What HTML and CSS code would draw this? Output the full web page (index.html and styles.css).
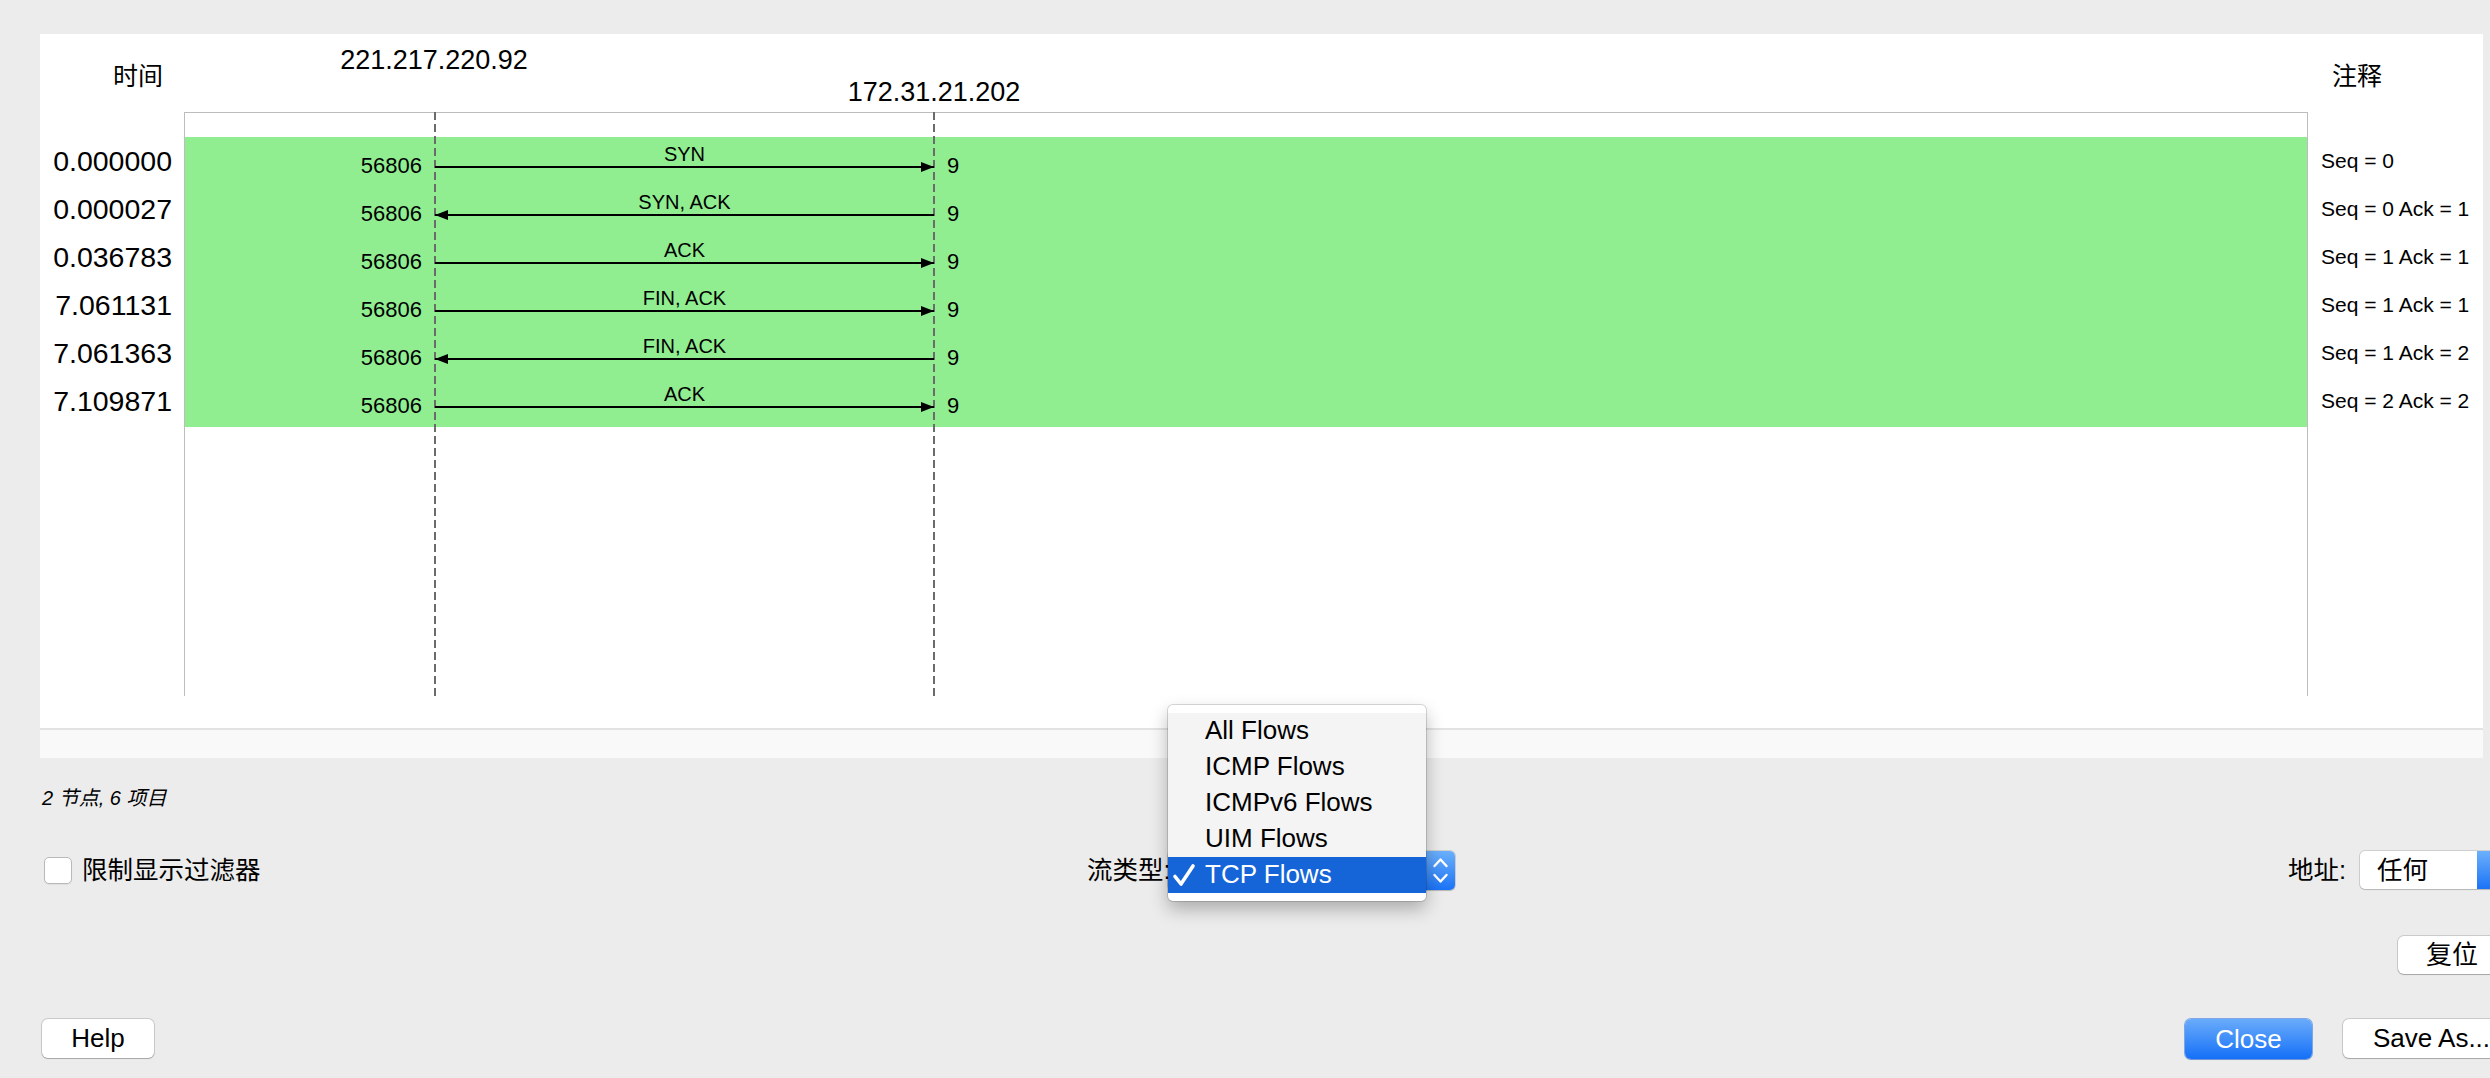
FILE: index.html
```html
<!DOCTYPE html>
<html lang="zh">
<head>
<meta charset="utf-8">
<title>Flow Graph</title>
<link rel="stylesheet" href="styles.css">
</head>
<body>
<div class="window">
  <div class="panel">
    <div class="diagram">
      <div class="time-head">时间</div>
      <div class="plot-head">
        <span class="node node-a">221.217.220.92</span>
        <span class="node node-b">172.31.21.202</span>
      </div>
      <div class="note-head">注释</div>

      <div class="times">
        <div>0.000000</div>
        <div>0.000027</div>
        <div>0.036783</div>
        <div>7.061131</div>
        <div>7.061363</div>
        <div>7.109871</div>
      </div>

      <div class="plot">
        <div class="lifeline lifeline-a"></div>
        <div class="lifeline lifeline-b"></div>
        <div class="band">
          <div class="row">
            <span class="port">56806</span>
            <div class="msg"><span class="lbl">SYN</span><i class="line to-right"></i></div>
            <span class="port-b">9</span>
          </div>
          <div class="row">
            <span class="port">56806</span>
            <div class="msg"><span class="lbl">SYN, ACK</span><i class="line to-left"></i></div>
            <span class="port-b">9</span>
          </div>
          <div class="row">
            <span class="port">56806</span>
            <div class="msg"><span class="lbl">ACK</span><i class="line to-right"></i></div>
            <span class="port-b">9</span>
          </div>
          <div class="row">
            <span class="port">56806</span>
            <div class="msg"><span class="lbl">FIN, ACK</span><i class="line to-right"></i></div>
            <span class="port-b">9</span>
          </div>
          <div class="row">
            <span class="port">56806</span>
            <div class="msg"><span class="lbl">FIN, ACK</span><i class="line to-left"></i></div>
            <span class="port-b">9</span>
          </div>
          <div class="row">
            <span class="port">56806</span>
            <div class="msg"><span class="lbl">ACK</span><i class="line to-right"></i></div>
            <span class="port-b">9</span>
          </div>
        </div>
      </div>

      <div class="notes">
        <div>Seq = 0</div>
        <div>Seq = 0 Ack = 1</div>
        <div>Seq = 1 Ack = 1</div>
        <div>Seq = 1 Ack = 1</div>
        <div>Seq = 1 Ack = 2</div>
        <div>Seq = 2 Ack = 2</div>
      </div>
    </div>
  </div>
  <div class="strip"></div>

  <div class="status">2 节点, 6 项目</div>

  <div class="controls">
    <label class="check">
      <span class="box"></span>
      <span class="check-label">限制显示过滤器</span>
    </label>
    <div class="flow">
      <span class="flow-label">流类型:</span>
      <div class="popup">
        <span class="stepper">
          <svg width="29" height="39" viewBox="0 0 29 39"><path d="M8.5 15 L14.5 8.5 L20.5 15" fill="none" stroke="#fff" stroke-width="2.4" stroke-linecap="round" stroke-linejoin="round"/><path d="M8.5 24 L14.5 30.5 L20.5 24" fill="none" stroke="#fff" stroke-width="2.4" stroke-linecap="round" stroke-linejoin="round"/></svg>
        </span>
        <div class="menu">
          <div class="menu-list">
            <div class="item">All Flows</div>
            <div class="item">ICMP Flows</div>
            <div class="item">ICMPv6 Flows</div>
            <div class="item">UIM Flows</div>
            <div class="item sel">
              <svg class="tick" width="26" height="24" viewBox="0 0 26 24"><path d="M4 13.5 L10 21 L22 3" fill="none" stroke="#fff" stroke-width="3.6" stroke-linecap="round" stroke-linejoin="round"/></svg>TCP Flows
            </div>
          </div>
        </div>
      </div>
    </div>
    <div class="addr">
      <span class="addr-label">地址:</span>
      <div class="combo">
        <span class="combo-text">任何</span>
        <span class="combo-step"></span>
      </div>
    </div>
  </div>

  <div class="reset-row">
    <button class="btn reset">复位</button>
  </div>

  <div class="buttons">
    <button class="btn help">Help</button>
    <button class="btn primary close">Close</button>
    <button class="btn save">Save As...</button>
  </div>
</div>
</body>
</html>
```

FILE: styles.css
```css
* { box-sizing: border-box; }
html, body { margin: 0; padding: 0; }
body {
  background: #ececec;
  width: 2490px;
  height: 1078px;
  overflow: hidden;
  font-family: "Liberation Sans", "Noto Sans CJK SC", sans-serif;
  color: #000;
}
.window { width: 2560px; padding-top: 34px; }

/* ---------- diagram panel ---------- */
.panel {
  margin-left: 40px;
  width: 2443px;
  height: 694px;
  background: #fff;
}
.diagram {
  display: grid;
  grid-template-columns: 144px 2124px 175px;
  grid-template-rows: 78px 584px;
}
.time-head {
  text-align: right;
  padding: 27px 21px 0 0;
  font-size: 25px;
  line-height: 30px;
}
.plot-head { position: relative; }
.node {
  position: absolute;
  font-size: 27px;
  line-height: 32px;
  white-space: nowrap;
  transform: translateX(-50%);
}
.node-a { left: 250px; top: 10px; }
.node-b { left: 750px; top: 42px; }
.note-head {
  padding: 27px 0 0 24px;
  font-size: 25px;
  line-height: 30px;
}
.times {
  padding: 25px 12px 0 0;
  text-align: right;
  font-size: 28.5px;
}
.times div { height: 48px; line-height: 48px; }

.plot {
  position: relative;
  border: 1px solid #bdbdbd;
  border-bottom: none;
  padding-top: 24px;
}
.lifeline {
  position: absolute;
  top: -1px;
  bottom: 0;
  width: 2px;
  background: repeating-linear-gradient(to bottom, #6b6b6b 0 8px, transparent 8px 12px);
  z-index: 1;
}
.lifeline-a { left: 249px; }
.lifeline-b { left: 748px; }
.band { background: #90ee90; padding-bottom: 2px; }
.row {
  display: grid;
  grid-template-columns: 250px 499px 1fr;
  height: 48px;
}
.port, .port-b {
  font-size: 22px;
  line-height: 24px;
  padding-top: 17px;
}
.port { text-align: right; padding-right: 13px; }
.port-b { padding-left: 13px; }
.msg { display: flex; flex-direction: column; }
.lbl {
  text-align: center;
  font-size: 20px;
  line-height: 22px;
  padding-top: 6px;
}
.line {
  position: relative;
  display: block;
  height: 2px;
  margin-top: 1px;
  background: #000;
  z-index: 2;
}
.to-right::after, .to-left::before {
  content: "";
  position: absolute;
  top: -4px;
  border-top: 5px solid transparent;
  border-bottom: 5px solid transparent;
}
.to-right::after { right: 0; border-left: 13px solid #000; }
.to-left::before { left: 0; border-right: 13px solid #000; }

.notes {
  padding: 25px 0 0 13px;
  font-size: 21px;
}
.notes div { height: 48px; line-height: 48px; white-space: nowrap; }

.strip {
  margin-left: 40px;
  width: 2443px;
  height: 30px;
  border-top: 2px solid #e3e3e3;
  background: #f9f9f9;
}

/* ---------- bottom controls ---------- */
.status {
  margin: 28px 0 0 42px;
  font-style: italic;
  font-size: 20px;
  line-height: 24px;
}
.controls {
  margin-top: 40px;
  height: 40px;
  display: grid;
  grid-template-columns: 1087px 1201px 1fr;
  align-items: center;
}
.check {
  display: flex;
  align-items: center;
  padding-left: 44px;
}
.box {
  width: 28px;
  height: 27px;
  border-radius: 5px;
  background: #fff;
  border: 1px solid #b9b9b9;
  box-shadow: 0 1px 1px rgba(0,0,0,0.06);
}
.check-label {
  margin-left: 10px;
  font-size: 25.5px;
  line-height: 30px;
}
.flow { display: flex; align-items: center; }
.flow-label {
  width: 81px;
  font-size: 25.5px;
  line-height: 30px;
  white-space: nowrap;
}
.popup {
  position: relative;
  width: 287px;
  height: 39px;
  background: #fff;
  border-radius: 5px;
  box-shadow: 0 0 0 1px rgba(0,0,0,0.12), 0 1px 1px rgba(0,0,0,0.12);
}
.stepper {
  position: absolute;
  right: 0; top: 0; bottom: 0;
  width: 29px;
  border-radius: 0 5px 5px 0;
  background: linear-gradient(#6cb0fc, #1b73f6);
}
.stepper svg { display: block; }
.menu {
  position: absolute;
  left: 0;
  top: -146px;
  width: 258px;
  height: 196px;
  padding: 8px 0;
  background: #fff;
  border-radius: 5px;
  box-shadow: 0 0 0 1px rgba(0,0,0,0.14), 0 8px 18px rgba(0,0,0,0.28);
  z-index: 5;
}
.menu-list { background: #f4f4f4; }
.item {
  height: 36px;
  line-height: 34px;
  padding-left: 37px;
  font-size: 26px;
  white-space: nowrap;
  position: relative;
}
.item.sel { background: #1565d9; color: #fff; }
.tick {
  position: absolute;
  left: 3px;
  top: 6px;
  display: block;
}

.addr { display: flex; align-items: center; }
.addr-label { font-size: 25.5px; line-height: 30px; }
.combo {
  position: relative;
  margin-left: 14px;
  width: 140px;
  height: 38px;
  background: #fff;
  border-radius: 5px;
  box-shadow: 0 0 0 1px rgba(0,0,0,0.12), 0 1px 1px rgba(0,0,0,0.12);
  overflow: hidden;
}
.combo-text {
  display: block;
  padding-left: 17px;
  font-size: 25.5px;
  line-height: 38px;
}
.combo-step {
  position: absolute;
  right: 0; top: 0; bottom: 0;
  width: 23px;
  background: linear-gradient(#6cb0fc, #1b73f6);
}

.btn {
  font-family: "Liberation Sans", "Noto Sans CJK SC", sans-serif;
  font-size: 26px;
  color: #000;
  background: #fff;
  border: none;
  border-radius: 6px;
  box-shadow: 0 0 0 1px rgba(0,0,0,0.14), 0 1px 1px rgba(0,0,0,0.18);
  height: 39px;
  line-height: 37px;
  padding: 0;
  text-align: center;
}
.reset-row {
  margin-top: 46px;
  display: flex;
  justify-content: flex-end;
  padding-right: 54px;
}
.reset { width: 108px; height: 38px; }
.buttons {
  margin-top: 45px;
  display: flex;
  padding: 0 40px 0 42px;
}
.help { width: 112px; }
.close {
  margin-left: auto;
  width: 127px;
  height: 40px;
  color: #fff;
  background: linear-gradient(#6aacfb, #1570f7);
  box-shadow: 0 0 0 1px rgba(20,100,230,0.5), 0 1px 1px rgba(0,0,0,0.15);
}
.save { margin-left: 31px; width: 177px; text-align: left; padding-left: 30px; }
```
